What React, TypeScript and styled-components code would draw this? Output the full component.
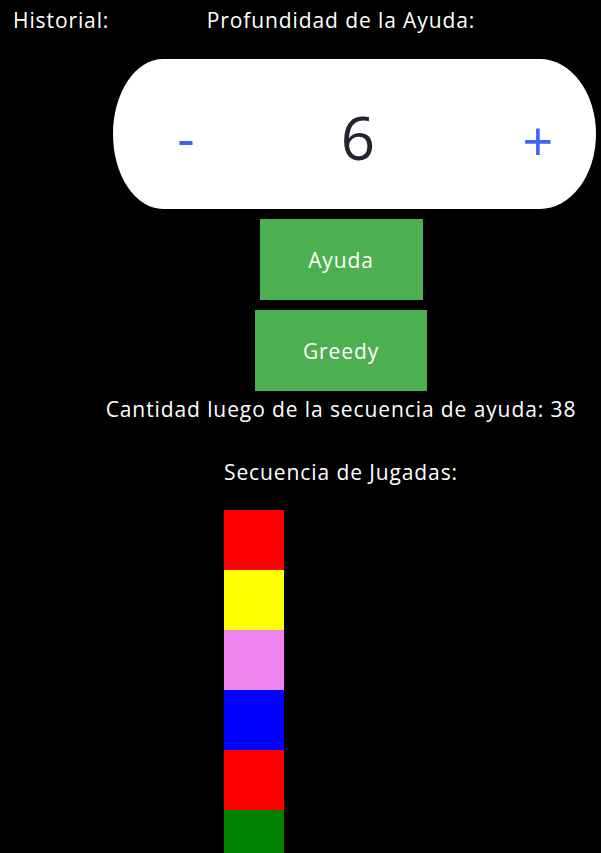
import React from "react";
import styled, { createGlobalStyle } from "styled-components";

const GlobalStyle = createGlobalStyle`
  html, body {
    margin: 0;
    padding: 0;
    background: #000;
  }
  body {
    font-family: "Open Sans", "Noto Sans", "Liberation Sans", sans-serif;
    color: #fff;
    font-size: 21px;
    letter-spacing: 0.9px;
  }
`;

const Page = styled.div`
  display: flex;
  flex-direction: row;
  align-items: flex-start;
  width: 601px;
  min-height: 853px;
  background: #000;
  overflow: hidden;
`;

const HistoryColumn = styled.div`
  width: 68px;
  padding: 6px 0 0 13px;
  line-height: 28px;
  white-space: nowrap;
`;

const MainColumn = styled.div`
  width: 520px;
  display: flex;
  flex-direction: column;
  align-items: center;
  padding-top: 6px;
`;

const Label = styled.div<{ $gap?: number }>`
  line-height: 28px;
  text-align: center;
  white-space: nowrap;
  margin-top: ${(p) => p.$gap ?? 0}px;
`;

const Stepper = styled.div`
  display: flex;
  align-self: flex-start;
  margin-left: 32px;
  margin-top: 25px;
  height: 150px;
`;

const StepButton = styled.button<{ $side: "left" | "right"; $width: number; $pad: number }>`
  width: ${(p) => p.$width}px;
  height: 150px;
  border: none;
  background: #fff;
  color: #3b66f5;
  font-family: inherit;
  font-size: 54px;
  line-height: 1;
  padding: ${(p) => (p.$side === "left" ? `6px 0 0 ${p.$pad}px` : `12px ${p.$pad}px 0 0`)};
  border-radius: ${(p) =>
    p.$side === "left" ? "50px 0 0 50px / 75px 0 0 75px" : "0 56px 56px 0 / 0 75px 75px 0"};
  cursor: pointer;
`;

const ValueDisplay = styled.div`
  width: 251px;
  height: 150px;
  background: #fff;
  color: #24242f;
  font-size: 60px;
  letter-spacing: 0;
  display: flex;
  align-items: center;
  justify-content: center;
  padding: 6px 53px 0 0;
  box-sizing: border-box;
`;

const ActionButton = styled.button<{ $width: number }>`
  width: ${(p) => p.$width}px;
  height: 81px;
  margin-top: 10px;
  border: none;
  background: #4caf50;
  color: #fff;
  font-family: inherit;
  font-size: 21px;
  letter-spacing: 0.9px;
  cursor: pointer;
`;

const Sequence = styled.div`
  margin-top: 35px;
  display: flex;
  flex-direction: column;
  align-items: flex-start;
`;

const Moves = styled.div`
  margin-top: 24px;
  display: flex;
  flex-direction: column;
`;

const MoveCell = styled.div<{ $color: string }>`
  width: 60px;
  height: 60px;
  background: ${(p) => p.$color};
`;

const moves = ["red", "yellow", "violet", "blue", "red", "green"];

export default function App() {
  return (
    <>
      <GlobalStyle />
      <Page>
        <HistoryColumn>Historial:</HistoryColumn>
        <MainColumn>
          <Label>Profundidad de la Ayuda:</Label>
          <Stepper>
            <StepButton $side="left" $width={146} $pad={0}>-</StepButton>
            <ValueDisplay>6</ValueDisplay>
            <StepButton $side="right" $width={86} $pad={30}>+</StepButton>
          </Stepper>
          <ActionButton $width={163}>Ayuda</ActionButton>
          <ActionButton $width={172}>Greedy</ActionButton>
          <Label $gap={4}>Cantidad luego de la secuencia de ayuda: 38</Label>
          <Sequence>
            <Label>Secuencia de Jugadas:</Label>
            <Moves>
              {moves.map((c, i) => (
                <MoveCell key={i} $color={c} />
              ))}
            </Moves>
          </Sequence>
        </MainColumn>
      </Page>
    </>
  );
}
